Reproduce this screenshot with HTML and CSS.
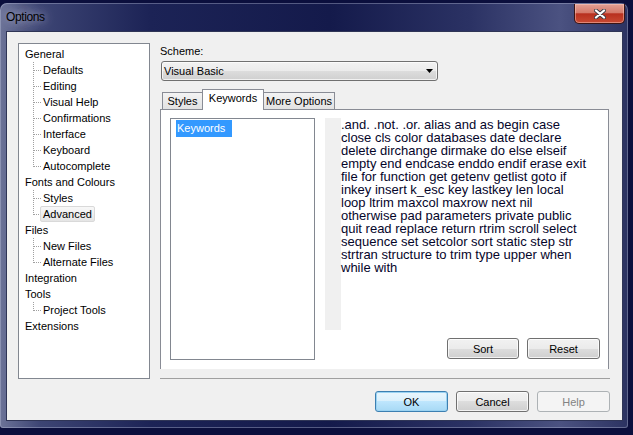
FILE: index.html
```html
<!DOCTYPE html>
<html lang="en">

<head>
    <meta charset="UTF-8">
    <title>Options</title>
    <link rel="stylesheet" href="styles.css">
</head>

<body>

    <div class="window">
        <div class="titlebar">
            <span class="title">Options</span>
            <button class="close" title="Close">
                <svg width="12" height="10" viewBox="0 0 12 10">
                    <path d="M2 1.5L10 8.5M10 1.5L2 8.5" stroke="#3a3a44" stroke-width="4" stroke-linecap="round" />
                    <path d="M2 1.5L10 8.5M10 1.5L2 8.5" stroke="#fff" stroke-width="2.3" stroke-linecap="round" />
                </svg>
            </button>
        </div>

        <div class="client">
            <div class="main">
                <!-- left tree -->
                <ul class="tree">
                    <li>General
                        <ul>
                            <li>Defaults</li>
                            <li>Editing</li>
                            <li>Visual Help</li>
                            <li>Confirmations</li>
                            <li>Interface</li>
                            <li>Keyboard</li>
                            <li>Autocomplete</li>
                        </ul>
                    </li>
                    <li>Fonts and Colours
                        <ul>
                            <li>Styles</li>
                            <li><span class="current">Advanced</span></li>
                        </ul>
                    </li>
                    <li>Files
                        <ul>
                            <li>New Files</li>
                            <li>Alternate Files</li>
                        </ul>
                    </li>
                    <li>Integration</li>
                    <li>Tools
                        <ul>
                            <li>Project Tools</li>
                        </ul>
                    </li>
                    <li>Extensions</li>
                </ul>

                <div class="pane">
                    <div class="label">Scheme:</div>
                    <div class="combo">
                        <span>Visual Basic</span>
                        <svg width="7" height="4" viewBox="0 0 7 4"><path d="M0 0H7L3.5 4Z" fill="#000" /></svg>
                    </div>

                    <div class="tabs">
                        <div class="tab styles">Styles</div>
                        <div class="tab keywords active">Keywords</div>
                        <div class="tab more">More Options</div>
                    </div>
                    <div class="panel">
                        <div class="listbox">
                            <div class="item selected">Keywords</div>
                        </div>
                        <div class="side">
                            <div class="editor">
                                <div class="gutter"></div>
                                <div class="words">.and. .not. .or. alias and as begin case close cls color databases date declare delete dirchange dirmake do else elseif empty end endcase enddo endif erase exit file for function get getenv getlist goto if inkey insert k_esc key lastkey len local loop ltrim maxcol maxrow next nil otherwise pad parameters private public quit read replace return rtrim scroll select sequence set setcolor sort static step str strtran structure to trim type upper when while with</div>
                            </div>
                            <div class="side-buttons">
                                <button class="btn sort">Sort</button>
                                <button class="btn">Reset</button>
                            </div>
                        </div>
                    </div>
                    <div class="sep"></div>
                </div>
            </div>

            <div class="footer">
                <button class="btn default">OK</button>
                <button class="btn">Cancel</button>
                <button class="btn" disabled>Help</button>
            </div>
        </div>
    </div>

</body>

</html>
```

FILE: styles.css
```css
* {
    box-sizing: border-box;
}

body {
    margin: 0;
    width: 633px;
    height: 435px;
    overflow: hidden;
    background-color: #0b0f3d;
    font-family: "Liberation Sans", Arial, sans-serif;
    font-size: 11px;
    color: #000;
}

/* aero frame */
.window {
    width: 628px;
    height: 425px;
    margin-top: 3px;
    padding: 0 5px 7px 6px;
    display: flex;
    flex-direction: column;
    border-radius: 7px 7px 3px 3px;
    background: linear-gradient(to right, #6c7398 0, #3d4574 40px, #1c2356 150px, #141a4b 330px, #2b3264 470px, #4b5281 560px, #2c3362 627px);
    box-shadow: inset 0 0 0 1px rgba(200, 205, 230, 0.35);
}

.titlebar {
    height: 28px;
    display: flex;
    align-items: flex-start;
}

.title {
    line-height: 28px;
    font-size: 12px;
    letter-spacing: -0.4px;
    color: #000;
    text-shadow: 0 0 8px rgba(190, 196, 222, 0.9), 0 0 14px rgba(160, 166, 196, 0.8);
}

.close {
    margin-left: auto;
    margin-right: -2px;
    margin-top: 1px;
    width: 51px;
    height: 20px;
    padding: 0;
    display: flex;
    align-items: center;
    justify-content: center;
    border: 1px solid #3a1414;
    border-top: none;
    border-radius: 0 0 5px 5px;
    background: linear-gradient(#e3a095 0%, #d57a6b 45%, #b8301f 52%, #c94a33 100%);
    box-shadow: inset 0 0 0 1px rgba(255, 210, 200, 0.45);
}

.client {
    flex: 1;
    display: flex;
    flex-direction: column;
    padding: 11px 12px 8px 11px;
    background-color: #f0f0f0;
    border: 1px solid #2f3556;
}

.main {
    display: flex;
    gap: 10px;
    height: 336px;
}

/* tree */
.tree {
    width: 132px;
    margin: 0;
    padding: 2px 0 0 6px;
    list-style: none;
    background-color: #fff;
    border: 1px solid #828790;
}

.tree li {
    line-height: 16px;
}

.tree ul {
    margin: 0;
    padding: 0;
    list-style: none;
}

.tree ul li {
    padding-left: 18px;
    background-image: repeating-linear-gradient(to bottom, #a0a0a0 0 1px, transparent 1px 2px), repeating-linear-gradient(to right, #a0a0a0 0 1px, transparent 1px 2px);
    background-size: 1px 100%, 8px 1px;
    background-position: 8px 0, 9px 8px;
    background-repeat: no-repeat;
}

.tree ul li:last-child {
    background-size: 1px 9px, 8px 1px;
}

.current {
    display: inline-block;
    margin-left: -3px;
    padding: 0 2px;
    line-height: 14px;
    border: 1px solid #d9d9d9;
    border-radius: 2px;
    background: linear-gradient(#f8f8f8, #e5e5e5);
}

/* right side */
.pane {
    flex: 1;
    display: flex;
    flex-direction: column;
}

.label {
    line-height: 16px;
    margin-bottom: 2px;
}

.combo {
    width: 277px;
    height: 20px;
    margin-left: 1px;
    padding: 0 4px 0 2px;
    display: flex;
    align-items: center;
    justify-content: space-between;
    border: 1px solid #707070;
    border-radius: 3px;
    background: linear-gradient(#f2f2f2 0%, #ebebeb 50%, #dddddd 50%, #cfcfcf 100%);
    box-shadow: inset 0 0 0 1px rgba(255, 255, 255, 0.7);
}

.tabs {
    display: flex;
    align-items: flex-end;
    margin-top: 8px;
    padding-left: 2px;
}

.tab {
    height: 17px;
    margin-right: -1px;
    text-align: center;
    line-height: 16px;
    border: 1px solid #898c95;
    border-bottom: none;
    background: linear-gradient(#f3f3f3, #e2e2e2);
}

.tab.styles {
    width: 41px;
}

.tab.keywords {
    width: 62px;
}

.tab.more {
    width: 72px;
}

.tab.active {
    height: 21px;
    margin-bottom: -1px;
    line-height: 17px;
    background: #fff;
    position: relative;
    z-index: 1;
}

.panel {
    height: 260px;
    margin-right: 1px;
    padding: 8px 8px 9px 9px;
    display: flex;
    gap: 10px;
    background-color: #fff;
    border: 1px solid #898c95;
    border-bottom: none;
}

.listbox {
    width: 145px;
    padding: 1px 0 0 5px;
    border: 1px solid #828790;
}

.item.selected {
    display: inline-block;
    height: 17px;
    line-height: 17px;
    padding: 0 7px 0 1px;
    color: #fff;
    background-color: #3399ff;
}

.side {
    flex: 1;
    display: flex;
    flex-direction: column;
}

.editor {
    height: 212px;
    display: flex;
}

.gutter {
    width: 16px;
    background-color: #f0f0f0;
}

.words {
    width: 249px;
    font-size: 13px;
    line-height: 13px;
    color: #05052a;
}

.side-buttons {
    display: flex;
    justify-content: flex-end;
    gap: 8px;
    margin-top: 8px;
}

.sep {
    margin-top: 9px;
    border-top: 1px solid #a0a0a0;
}

.footer {
    display: flex;
    justify-content: flex-end;
    gap: 8px;
    margin-top: 12px;
}

/* buttons */
.btn {
    width: 73px;
    height: 21px;
    padding: 0;
    font: inherit;
    color: #000;
    border: 1px solid #707070;
    border-radius: 3px;
    background: linear-gradient(#f2f2f2 0%, #ebebeb 50%, #dddddd 50%, #cfcfcf 100%);
    box-shadow: inset 0 0 0 1px rgba(255, 255, 255, 0.75);
}

.btn.sort {
    width: 72px;
}

.btn.default {
    border-color: #3c7fb1;
    background: linear-gradient(#eaf6fd 0%, #d9f0fc 50%, #bee6fd 50%, #a7d9f5 100%);
    box-shadow: inset 0 0 0 1px #9bd3f2;
}

.btn:disabled {
    color: #838383;
    border-color: #adb2b5;
    background: #f4f4f4;
    box-shadow: none;
}
```
